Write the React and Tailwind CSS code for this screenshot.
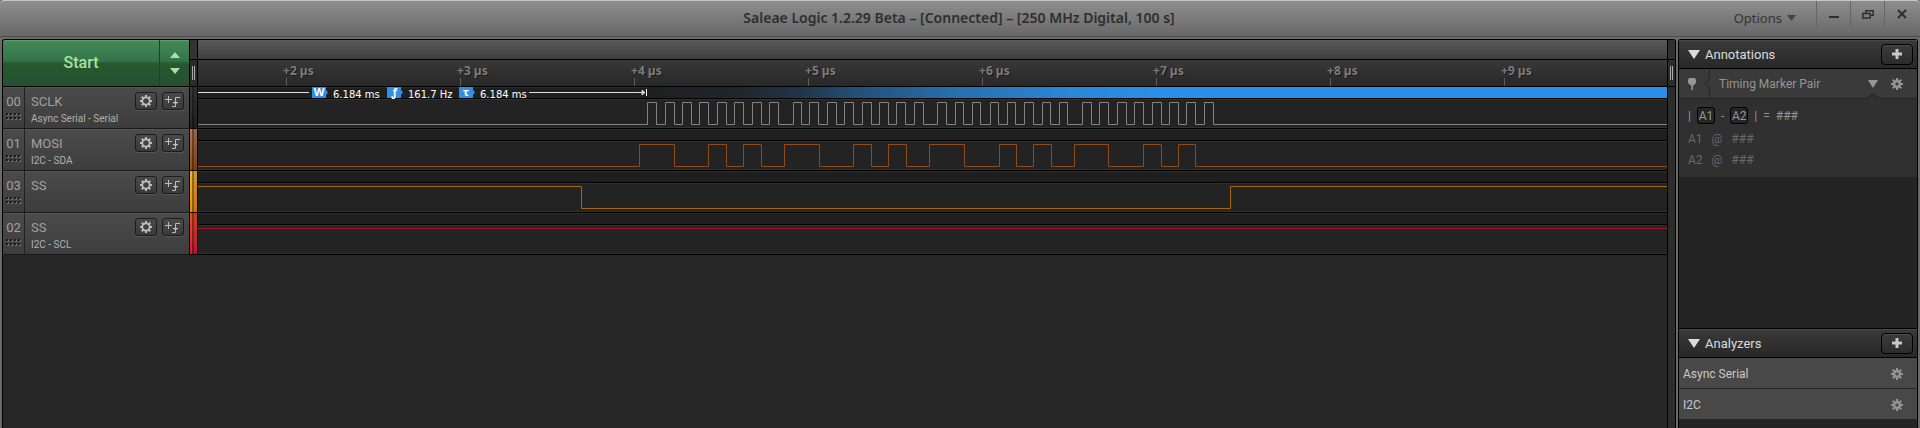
import React from "react";

const SCLK_EDGES = [
  647, 656, 665, 674, 682, 691, 699, 708, 717, 726, 734, 743, 752, 761, 769, 778,
  793, 801, 809, 818, 827, 836, 844, 853, 862, 871, 879, 888, 896, 905, 914, 923,
  937, 946, 955, 963, 972, 980, 990, 998, 1007, 1015, 1024, 1033, 1042, 1050, 1059, 1067,
  1082, 1091, 1099, 1108, 1117, 1126, 1134, 1143, 1152, 1161, 1169, 1178, 1186, 1195, 1204, 1213,
];
const MOSI_EDGES = [
  639, 674, 708, 726, 743, 761, 784, 819, 853, 871, 888, 906, 929, 964, 999, 1016,
  1033, 1051, 1074, 1108, 1143, 1161, 1178, 1195,
];
const LANE_START = 198;

const CHANNELS = [
  { id: "00", name: "SCLK", sub: "Async Serial - Serial", stroke: "#838383", edges: SCLK_EDGES, high: false, strip: "from-[#3a3a3a] to-[#262626]", marker: true },
  { id: "01", name: "MOSI", sub: "I2C - SDA", stroke: "#8f4a17", edges: MOSI_EDGES, high: false, strip: "from-[#b07a52] to-[#9a4a10]" },
  { id: "03", name: "SS", sub: "", stroke: "#a86400", edges: [581, 1230], high: true, strip: "from-[#f2b431] to-[#ee8c00]" },
  { id: "02", name: "SS", sub: "I2C - SCL", stroke: "#a01028", edges: [], high: true, strip: "from-[#e8501c] to-[#d8143c]" },
];

function wavePath(edges, startHigh) {
  let high = startHigh;
  let d = `M0 ${high ? 3.5 : 25.5}`;
  edges.forEach((x) => {
    high = !high;
    d += ` H${x - LANE_START + 0.5} V${high ? 3.5 : 25.5}`;
  });
  return d + " H6000";
}

function Gear({ size = 14, ring = 3.6, hole = 2, teeth = 8, className = "" }) {
  return (
    <svg width={size} height={size} viewBox="-7 -7 14 14" className={className} aria-hidden="true">
      {Array.from({ length: teeth }, (_, i) => (
        <rect key={i} x="-1" y="-6" width="2" height="3" fill="currentColor" transform={`rotate(${(i * 360) / teeth})`} />
      ))}
      <circle r={(ring + hole) / 2} fill="none" stroke="currentColor" strokeWidth={ring - hole} />
    </svg>
  );
}

function Grip() {
  return (
    <svg width="15" height="7" viewBox="0 0 15 7" shapeRendering="crispEdges" aria-hidden="true">
      {[0, 4, 8, 12].map((x) =>
        [0, 4].map((y) => (
          <g key={`${x}-${y}`}>
            <rect x={x + 1} y={y + 1} width="2" height="2" fill="#707070" />
            <rect x={x} y={y} width="2" height="2" fill="#1c1c1c" />
          </g>
        ))
      )}
    </svg>
  );
}

const smallButton =
  "flex h-[18px] w-[22px] items-center justify-center rounded-[3px] border border-[#1c1c1c] bg-linear-to-b from-[#4a4a4a] to-[#3a3a3a] text-[#bdbdbd] shadow-[0_1px_0_#555]";

function ChannelHeader({ channel }) {
  return (
    <div className="flex h-[42px] border-b border-[#191919] bg-linear-to-b from-[#4b4b4b] to-[#3d3d3d] text-[#a0a0a0] shadow-[inset_0_1px_0_#555]">
      <div className="flex w-[22px] flex-col items-center gap-[4px] border-r border-[#222] pt-[7px]">
        <span className="text-[13px] leading-[15px]">{channel.id}</span>
        <Grip />
      </div>
      <div className="flex flex-1 justify-between pt-[5px] pr-[5px] pl-[6px]">
        <div className="flex flex-col gap-[4px] pt-[2px]">
          <span className="text-[13px] leading-[15px]">{channel.name}</span>
          <span className="text-[10px] leading-[12px] whitespace-nowrap text-[#b0b0b0]">{channel.sub}</span>
        </div>
        <div className="flex gap-[5px]">
          <button type="button" aria-label={`Channel ${channel.id} settings`} className={smallButton}>
            <Gear size={14} ring={4.6} hole={2.8} />
          </button>
          <button type="button" aria-label={`Channel ${channel.id} trigger`} className={smallButton}>
            <svg width="16" height="14" viewBox="0 0 16 14" fill="none" stroke="currentColor" aria-hidden="true">
              <path d="M0 5.5H7M3.5 2V9M7 12.5H10.5V3.5H15M8 8.5H13" />
              <path d="M8.5 9.5H12.5L10.5 6.5Z" fill="currentColor" stroke="none" />
            </svg>
          </button>
        </div>
      </div>
    </div>
  );
}

function Tag({ letter, value }) {
  return (
    <span className="flex items-start">
      <svg width="16" height="11" viewBox="0 0 16 11" className="overflow-visible" aria-hidden="true">
        <path d="M0 0H14V3L16 5.5L14 8V11H0Z" fill="#2f8fe4" />
        <text x="7" y="9" textAnchor="middle" fontSize="11" fontWeight="700" fill="#fff" className="font-['Noto_Sans',sans-serif]">{letter}</text>
      </svg>
      <span className="pt-[2px] pl-[5px] font-['DejaVu_Sans',sans-serif] text-[10px] leading-[11px] whitespace-nowrap text-white">{value}</span>
    </span>
  );
}

function MarkerLane() {
  return (
    <div className="flex h-[11px] items-start">
      <div className="flex w-[449px] shrink-0 items-start">
        <span className="mt-[5px] h-px w-[111px] bg-[#e0e0e0]" />
        <div className="flex w-[328px] items-start justify-start pl-[3px]">
          <div className="w-[75px]"><Tag letter="W" value="6.184 ms" /></div>
          <div className="w-[72px]"><Tag letter="ƒ" value="161.7 Hz" /></div>
          <div className="w-[70px]"><Tag letter="τ" value="6.184 ms" /></div>
          <span className="mt-[5px] h-px flex-1 bg-[#e0e0e0]" />
        </div>
        <svg width="10" height="11" viewBox="0 0 10 11" className="shrink-0" aria-hidden="true">
          <path d="M0 5.5H8M5 3L8 5.5L5 8Z" stroke="#d8d8d8" fill="#aaa" strokeWidth="1" />
          <path d="M9.5 2V9" stroke="#fff" />
        </svg>
      </div>
      <div className="h-full flex-1 bg-[linear-gradient(90deg,#1f1f1f_0px,#20262c_90px,#213446_150px,#245078_210px,#2870b0_313px,#2a86d6_420px,#2b8fe8_510px,#2b8fe8_100%)]" />
    </div>
  );
}

function Lane({ channel }) {
  return (
    <div className="flex h-[42px] flex-col border-b border-black">
      <div className="h-[12px] border-b border-black bg-[#1f1f1f] shadow-[inset_0_1px_0_#2c2c2c]">
        {channel.marker && <MarkerLane />}
      </div>
      <div className="h-[29px] overflow-hidden border-y border-[#303030] bg-[#232323]">
        <svg width="100%" height="27" className="block" role="img" aria-label={`${channel.name} waveform`}>
          <path d={wavePath(channel.edges, channel.high)} transform="translate(0 -1)" fill="none" stroke={channel.stroke} />
        </svg>
      </div>
    </div>
  );
}

function SectionHeader({ title }) {
  return (
    <div className="flex h-[29px] items-center border-b border-black bg-linear-to-b from-[#3a3a3a] to-[#282828] pr-[4px] pl-[9px] shadow-[inset_0_1px_0_#484848]">
      <svg width="12" height="9" viewBox="0 0 12 9" aria-hidden="true"><path d="M0 0H12L6 9Z" fill="#dcdcdc" /></svg>
      <h2 className="flex-1 pt-px pl-[5px] text-[13px] leading-[16px] text-[#dcdcdc]">{title}</h2>
      <button type="button" aria-label={`Add to ${title}`} className="flex h-[21px] w-[32px] items-center justify-center rounded-[4px] border border-black bg-linear-to-b from-[#3c3c3c] to-[#2c2c2c] shadow-[inset_0_1px_0_#4a4a4a]">
        <svg width="12" height="12" viewBox="0 0 12 12" aria-hidden="true"><path d="M6 1V11M1 6H11" stroke="#c8c8c8" strokeWidth="3" /></svg>
      </button>
    </div>
  );
}

function AnalyzerRow({ name, last }) {
  return (
    <li className={`flex items-center justify-between bg-[#484848] pt-px pr-[13px] pl-[4px] ${last ? "h-[30px]" : "h-[31px] border-b border-[#262626]"}`}>
      <span className="text-[12px] leading-[16px] text-[#c8c8c8]">{name}</span>
      <button type="button" aria-label={`${name} settings`} className="text-[#949494]"><Gear size={14} ring={4} hole={1.6} /></button>
    </li>
  );
}

function WindowButton({ label, children }) {
  return (
    <button type="button" aria-label={label} className="flex h-[26px] w-[34px] items-center justify-center border-l border-[#666] text-[#2e2e2e]">
      {children}
    </button>
  );
}

export default function App() {
  return (
    <div className="flex h-screen flex-col bg-[#6a6a6a] font-['Roboto',sans-serif]">
      <header className="flex h-[37px] shrink-0 items-start rounded-t-[4px] border-t border-b border-t-[#c4c6c6] border-b-[#4e4e4e] bg-linear-to-b from-[#8e8e8e] to-[#686868] text-[#2e2e2e]">
        <div className="flex-1" />
        <h1 className="pt-[9px] font-['Noto_Sans',sans-serif] text-[14px] leading-[16px] font-semibold whitespace-nowrap">
          Saleae Logic 1.2.29 Beta – [Connected] – [250 MHz Digital, 100 s]
        </h1>
        <div className="flex flex-1 justify-end pr-[2px]">
          <button type="button" className="mr-[20px] flex items-center gap-[5px] pt-[8px] font-['Noto_Sans',sans-serif] text-[13px] leading-[16px] text-[#333]">
            Options
            <svg width="9" height="6" viewBox="0 0 9 6" aria-hidden="true"><path d="M0 0H9L4.5 6Z" fill="#444" /></svg>
          </button>
          <WindowButton label="Minimize">
            <svg width="10" height="10" viewBox="0 0 10 10"><path d="M0 8H10" stroke="currentColor" strokeWidth="2" /></svg>
          </WindowButton>
          <WindowButton label="Restore">
            <svg width="12" height="9" viewBox="0 0 12 9" fill="none" stroke="currentColor" strokeWidth="1.5"><path d="M3.8 3V.8H11.2V5.2H9M.8 3.5H8.2V8H.8Z" /></svg>
          </WindowButton>
          <WindowButton label="Close">
            <svg width="10" height="10" viewBox="0 0 10 10"><path d="M1 1L9 9M9 1L1 9" stroke="currentColor" strokeWidth="2" /></svg>
          </WindowButton>
        </div>
      </header>

      <div className="flex min-h-0 flex-1 gap-[2px] pt-[2px] pr-[2px] pl-[2px]">
        <main className="flex min-w-0 flex-1 rounded-t-[3px] border-x border-t border-black bg-[#272727]">
          <section className="w-[186px] shrink-0" aria-label="Channels">
            <div className="flex h-[47px] rounded-tl-[3px] border-b border-black bg-[linear-gradient(180deg,#458a58_0%,#34744a_45%,#26592f_52%,#255032_100%)] text-[#a9e29f] shadow-[inset_0_1px_0_#5aa06c]">
              <button type="button" className="flex-1 border-r border-[#1b4427] text-[16px] font-medium">Start</button>
              <div className="flex w-[29px] flex-col items-center justify-center gap-[10px]">
                <button type="button" aria-label="Increase capture"><svg width="10" height="6" viewBox="0 0 10 6" className="block"><path d="M5 0L10 6H0Z" fill="currentColor" /></svg></button>
                <button type="button" aria-label="Decrease capture"><svg width="10" height="6" viewBox="0 0 10 6" className="block"><path d="M0 0H10L5 6Z" fill="currentColor" /></svg></button>
              </div>
            </div>
            {CHANNELS.map((c) => <ChannelHeader key={c.id} channel={c} />)}
          </section>

          <div className="flex w-[9px] shrink-0 flex-col">
            <div className="h-[20px] border border-t-0 border-black bg-[#333]" />
            <div className="flex h-[27px] items-center justify-center gap-px border border-t-0 border-black bg-[#2b2b2b]">
              <span className="h-[14px] w-px bg-[#aaa]" /><span className="h-[14px] w-px bg-[#aaa]" />
            </div>
            {CHANNELS.map((c) => (
              <div key={c.id} className={`flex h-[42px] justify-end border border-t-0 border-black bg-linear-to-b ${c.strip}`}>
                <span className="w-[2px] bg-black/40" />
                <span className="w-[3px] bg-black/15" />
              </div>
            ))}
          </div>

          <section className="min-w-0 flex-1 overflow-hidden" aria-label="Waveforms">
            <div className="h-[20px] border-b border-black bg-linear-to-b from-[#5a5a5a] to-[#3e3e3e]" />
            <div className="flex h-[27px] border-b border-black bg-linear-to-b from-[#383838] to-[#282828] pl-[85px]">
              {[2, 3, 4, 5, 6, 7, 8, 9].map((n) => (
                <div key={n} className="flex w-[174px] shrink-0 flex-col justify-between">
                  <span className="pt-[4px] font-['Noto_Sans',sans-serif] text-[12px] leading-[14px] font-bold text-[#7c7c7c] [text-shadow:1px_1px_0_#1a1a1a]">+{n} µs</span>
                  <span className="ml-[3px] h-[8px] w-px bg-[#5c5c5c]" />
                </div>
              ))}
            </div>
            {CHANNELS.map((c) => <Lane key={c.id} channel={c} />)}
          </section>

          <div className="flex w-[8px] shrink-0 flex-col border-l border-black bg-[#2c2c2c]">
            <div className="h-[20px] border-b border-black bg-[#303030]" />
            <div className="flex h-[27px] items-center justify-center gap-px border-b border-black">
              <span className="h-[14px] w-px bg-[#aaa]" /><span className="h-[14px] w-px bg-[#aaa]" />
            </div>
          </div>
        </main>

        <aside className="flex w-[240px] shrink-0 flex-col rounded-t-[3px] border-x border-t border-black bg-[#242424]">
          <SectionHeader title="Annotations" />
          <div className="flex h-[29px] items-center bg-[#3a3a3a] pl-[9px] text-[#969696]">
            <svg width="8" height="12" viewBox="0 0 8 12" aria-hidden="true"><path d="M1 0H7L8 2V5L5 8V12H3.4V8L0 5V2Z" fill="currentColor" /></svg>
            <svg width="6" height="29" viewBox="0 0 6 29" className="ml-[8px]" fill="none" stroke="#262626" aria-hidden="true"><path d="M5.5 0V9L1 14L5.5 19V29" /></svg>
            <span className="flex-1 pl-[9px] text-[12px] leading-[16px]">Timing Marker Pair</span>
            <button type="button" aria-label="Marker menu"><svg width="10" height="8" viewBox="0 0 10 8"><path d="M0 0H10L5 8Z" fill="currentColor" /></svg></button>
            <button type="button" aria-label="Marker settings" className="mr-[13px] ml-[12px]"><Gear size={14} ring={4} hole={1.6} /></button>
          </div>
          <div className="flex h-[5px] justify-end bg-[#303030]">
            <span className="h-px flex-1 bg-[#232323]" />
            <svg width="16" height="5" viewBox="0 0 16 5" className="overflow-visible" aria-hidden="true">
              <path d="M0 1L8 -4L16 1Z" fill="#303030" />
              <path d="M0 .5H1L8 -4L15 .5H16" fill="none" stroke="#232323" />
            </svg>
            <span className="h-px w-[36px] bg-[#232323]" />
          </div>
          <div className="bg-[#303030] pb-[7px] pl-[9px] text-[12px] text-[#686868]">
            <div className="flex h-[25px] items-center text-[#969696]">
              <span>|</span>
              <span className="mx-[6px] flex h-[17px] w-[18px] items-center justify-center rounded-[3px] border border-black bg-[#262626]">A1</span>
              <span>-</span>
              <span className="mx-[6px] flex h-[17px] w-[18px] items-center justify-center rounded-[3px] border border-black bg-[#262626]">A2</span>
              <span>|</span><span className="pl-[6px]">=</span><span className="pl-[6px]">###</span>
            </div>
            <div className="flex h-[21px] items-center gap-[9px]"><span>A1</span><span>@</span><span>###</span></div>
            <div className="flex h-[21px] items-center gap-[9px]"><span>A2</span><span>@</span><span>###</span></div>
          </div>
          <div className="flex-1" />
          <div className="border-t border-black"><SectionHeader title="Analyzers" /></div>
          <ul className="pb-[9px]">
            <AnalyzerRow name="Async Serial" />
            <AnalyzerRow name="I2C" last />
          </ul>
        </aside>
      </div>
    </div>
  );
}
